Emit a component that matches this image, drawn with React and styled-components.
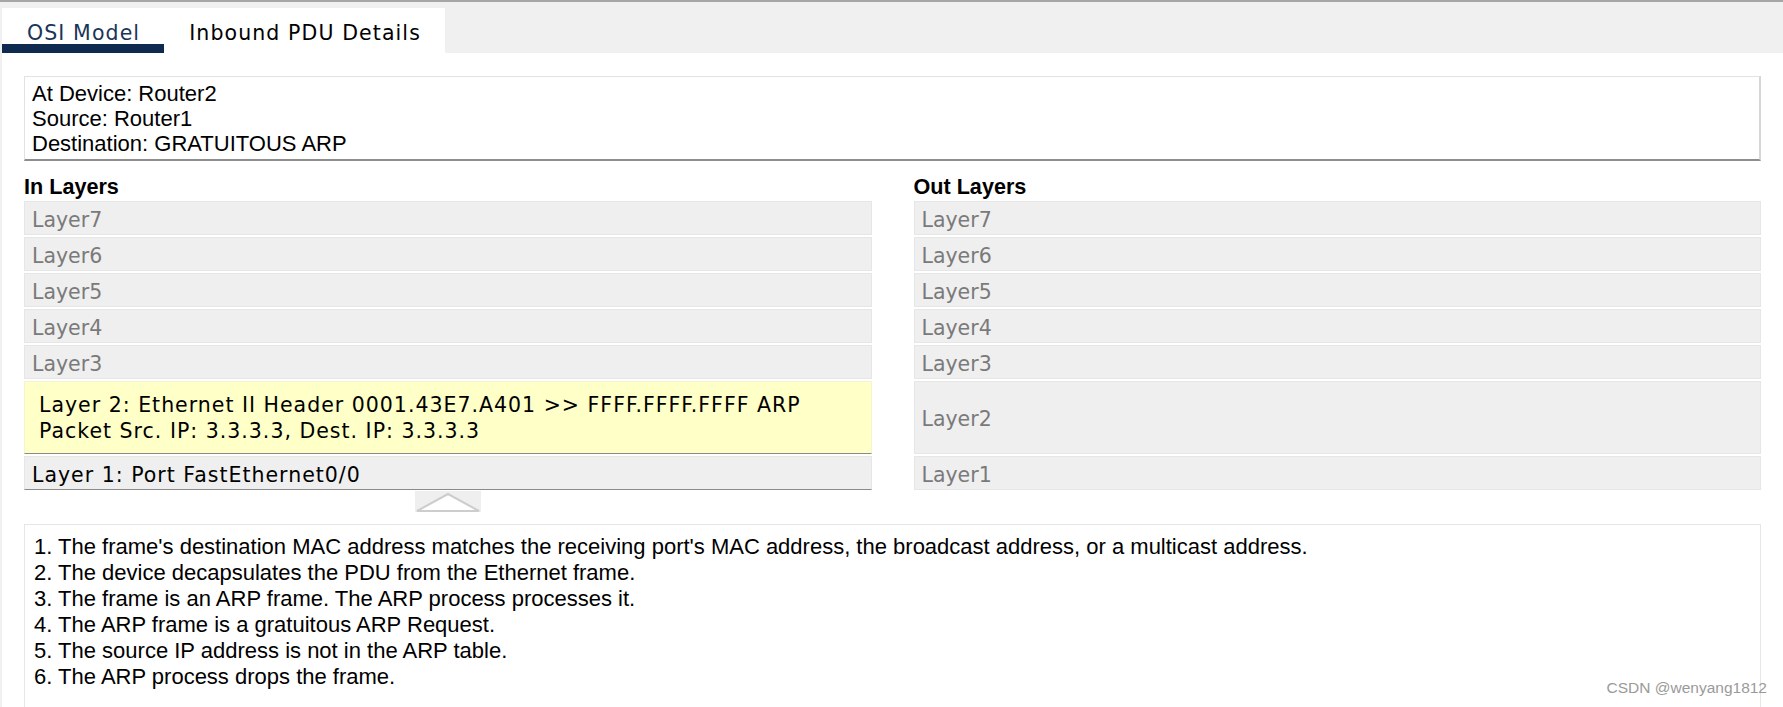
import styled, { createGlobalStyle } from 'styled-components';

const GlobalStyle = createGlobalStyle`
  html, body, #root {
    margin: 0;
    height: 100%;
  }
  body {
    font-family: "Liberation Sans", Arial, sans-serif;
    color: #000;
  }
`;

const inLayers = [
  { name: 'Layer7' },
  { name: 'Layer6' },
  { name: 'Layer5' },
  { name: 'Layer4' },
  { name: 'Layer3' },
  {
    name: 'Layer 2: Ethernet II Header 0001.43E7.A401 >> FFFF.FFFF.FFFF ARP',
    second: 'Packet Src. IP: 3.3.3.3, Dest. IP: 3.3.3.3',
    highlight: true,
  },
  { name: 'Layer 1: Port FastEthernet0/0', active: true },
];

const outLayers = ['Layer7', 'Layer6', 'Layer5', 'Layer4', 'Layer3', 'Layer2', 'Layer1'];

const steps = [
  "The frame's destination MAC address matches the receiving port's MAC address, the broadcast address, or a multicast address.",
  'The device decapsulates the PDU from the Ethernet frame.',
  'The frame is an ARP frame. The ARP process processes it.',
  'The ARP frame is a gratuitous ARP Request.',
  'The source IP address is not in the ARP table.',
  'The ARP process drops the frame.',
];

export default function App() {
  return (
    <Page>
      <GlobalStyle />
      <TabBar>
        <Tab $active>OSI Model</Tab>
        <Tab>Inbound PDU Details</Tab>
      </TabBar>
      <Content>
        <InfoBox>
          <div>At Device: Router2</div>
          <div>Source: Router1</div>
          <div>Destination: GRATUITOUS ARP</div>
        </InfoBox>
        <Columns>
          <Column>
            <Heading>In Layers</Heading>
            {inLayers.map((l) => (
              <LayerRow
                key={l.name}
                $tall={!!l.second}
                $highlight={l.highlight}
                $active={l.active || l.highlight}
              >
                <span>
                  {l.name}
                  {l.second && <br />}
                  {l.second}
                </span>
              </LayerRow>
            ))}
            <UpButton>
              <svg width="66" height="21" viewBox="0 0 66 21">
                <rect width="66" height="21" fill="#efefef" />
                <polygon points="2,20 33,3 64,20" fill="#fff" stroke="#cdcdcd" strokeWidth="2" />
              </svg>
            </UpButton>
          </Column>
          <Column>
            <Heading>Out Layers</Heading>
            {outLayers.map((name) => (
              <LayerRow key={name} $tall={name === 'Layer2'}>
                <span>{name}</span>
              </LayerRow>
            ))}
          </Column>
        </Columns>
        <DescBox>
          {steps.map((s, i) => (
            <div key={i}>
              {i + 1}. {s}
            </div>
          ))}
        </DescBox>
      </Content>
      <Watermark>CSDN @wenyang1812</Watermark>
    </Page>
  );
}

const Page = styled.div`
  position: relative;
  box-sizing: border-box;
  height: 100%;
  display: flex;
  flex-direction: column;
  background: #f0f0f0;
  border-top: 2px solid #a6a6a6;
  padding-left: 2px;
  overflow: hidden;
`;

const TabBar = styled.div`
  display: flex;
  align-items: flex-end;
  height: 51px;
  flex-shrink: 0;
`;

const Tab = styled.div`
  box-sizing: border-box;
  height: 46px;
  padding: 13px 24px 0 25px;
  background: #fff;
  font-family: "DejaVu Sans", Verdana, sans-serif;
  font-size: 20.5px;
  letter-spacing: 1.1px;
  line-height: 24px;
  color: ${(p) => (p.$active ? '#1b3558' : '#000')};
  border-bottom: 10px solid ${(p) => (p.$active ? '#0f2a4f' : '#fff')};
  margin-bottom: -1px;
`;

const Content = styled.div`
  flex: 1;
  display: flex;
  flex-direction: column;
  background: #fff;
  padding: 23px 22px 0 22px;
`;

const InfoBox = styled.div`
  border: 1px solid #e2e2e2;
  border-right: 2px solid #d6d6d6;
  border-bottom: 2px solid #8e8e8e;
  padding: 4px 7px 3px;
  font-size: 22px;
  line-height: 25px;
`;

const Columns = styled.div`
  display: grid;
  grid-template-columns: 1fr 1fr;
  column-gap: 42px;
  margin-top: 14px;
`;

const Column = styled.div`
  display: flex;
  flex-direction: column;
`;

const Heading = styled.div`
  font-weight: bold;
  font-size: 21.6px;
  line-height: 24px;
  margin-bottom: 2px;
`;

const LayerRow = styled.div`
  box-sizing: border-box;
  height: ${(p) => (p.$tall ? '73px' : '34px')};
  margin-bottom: 2px;
  display: flex;
  align-items: center;
  padding: ${(p) => (p.$highlight ? '1px 14px 0' : '3px 7px 0')};
  background: ${(p) => (p.$highlight ? '#ffffc8' : '#efefef')};
  border: 1px solid ${(p) => (p.$highlight ? '#f4f4d4' : '#e6e6e6')};
  border-bottom-color: ${(p) => (p.$active ? '#8a8a8a' : '#e6e6e6')};
  font-family: "DejaVu Sans", Verdana, sans-serif;
  font-size: 20.5px;
  letter-spacing: ${(p) => (p.$active ? '1px' : '0')};
  line-height: 26px;
  color: ${(p) => (p.$active ? '#000' : '#7a7a7a')};
  white-space: nowrap;
`;

const UpButton = styled.div`
  display: flex;
  justify-content: center;
  margin-top: -1px;

  svg {
    display: block;
  }
`;

const DescBox = styled.div`
  flex: 1;
  margin-top: 12px;
  border: 1px solid #e6e6e6;
  border-bottom: none;
  padding: 9px 9px 0;
  font-size: 22px;
  line-height: 26px;
`;

const Watermark = styled.div`
  position: absolute;
  right: 16px;
  bottom: 10px;
  font-family: "Liberation Sans", Arial, sans-serif;
  font-size: 15.5px;
  color: #9a9a9a;
  pointer-events: none;
`;
